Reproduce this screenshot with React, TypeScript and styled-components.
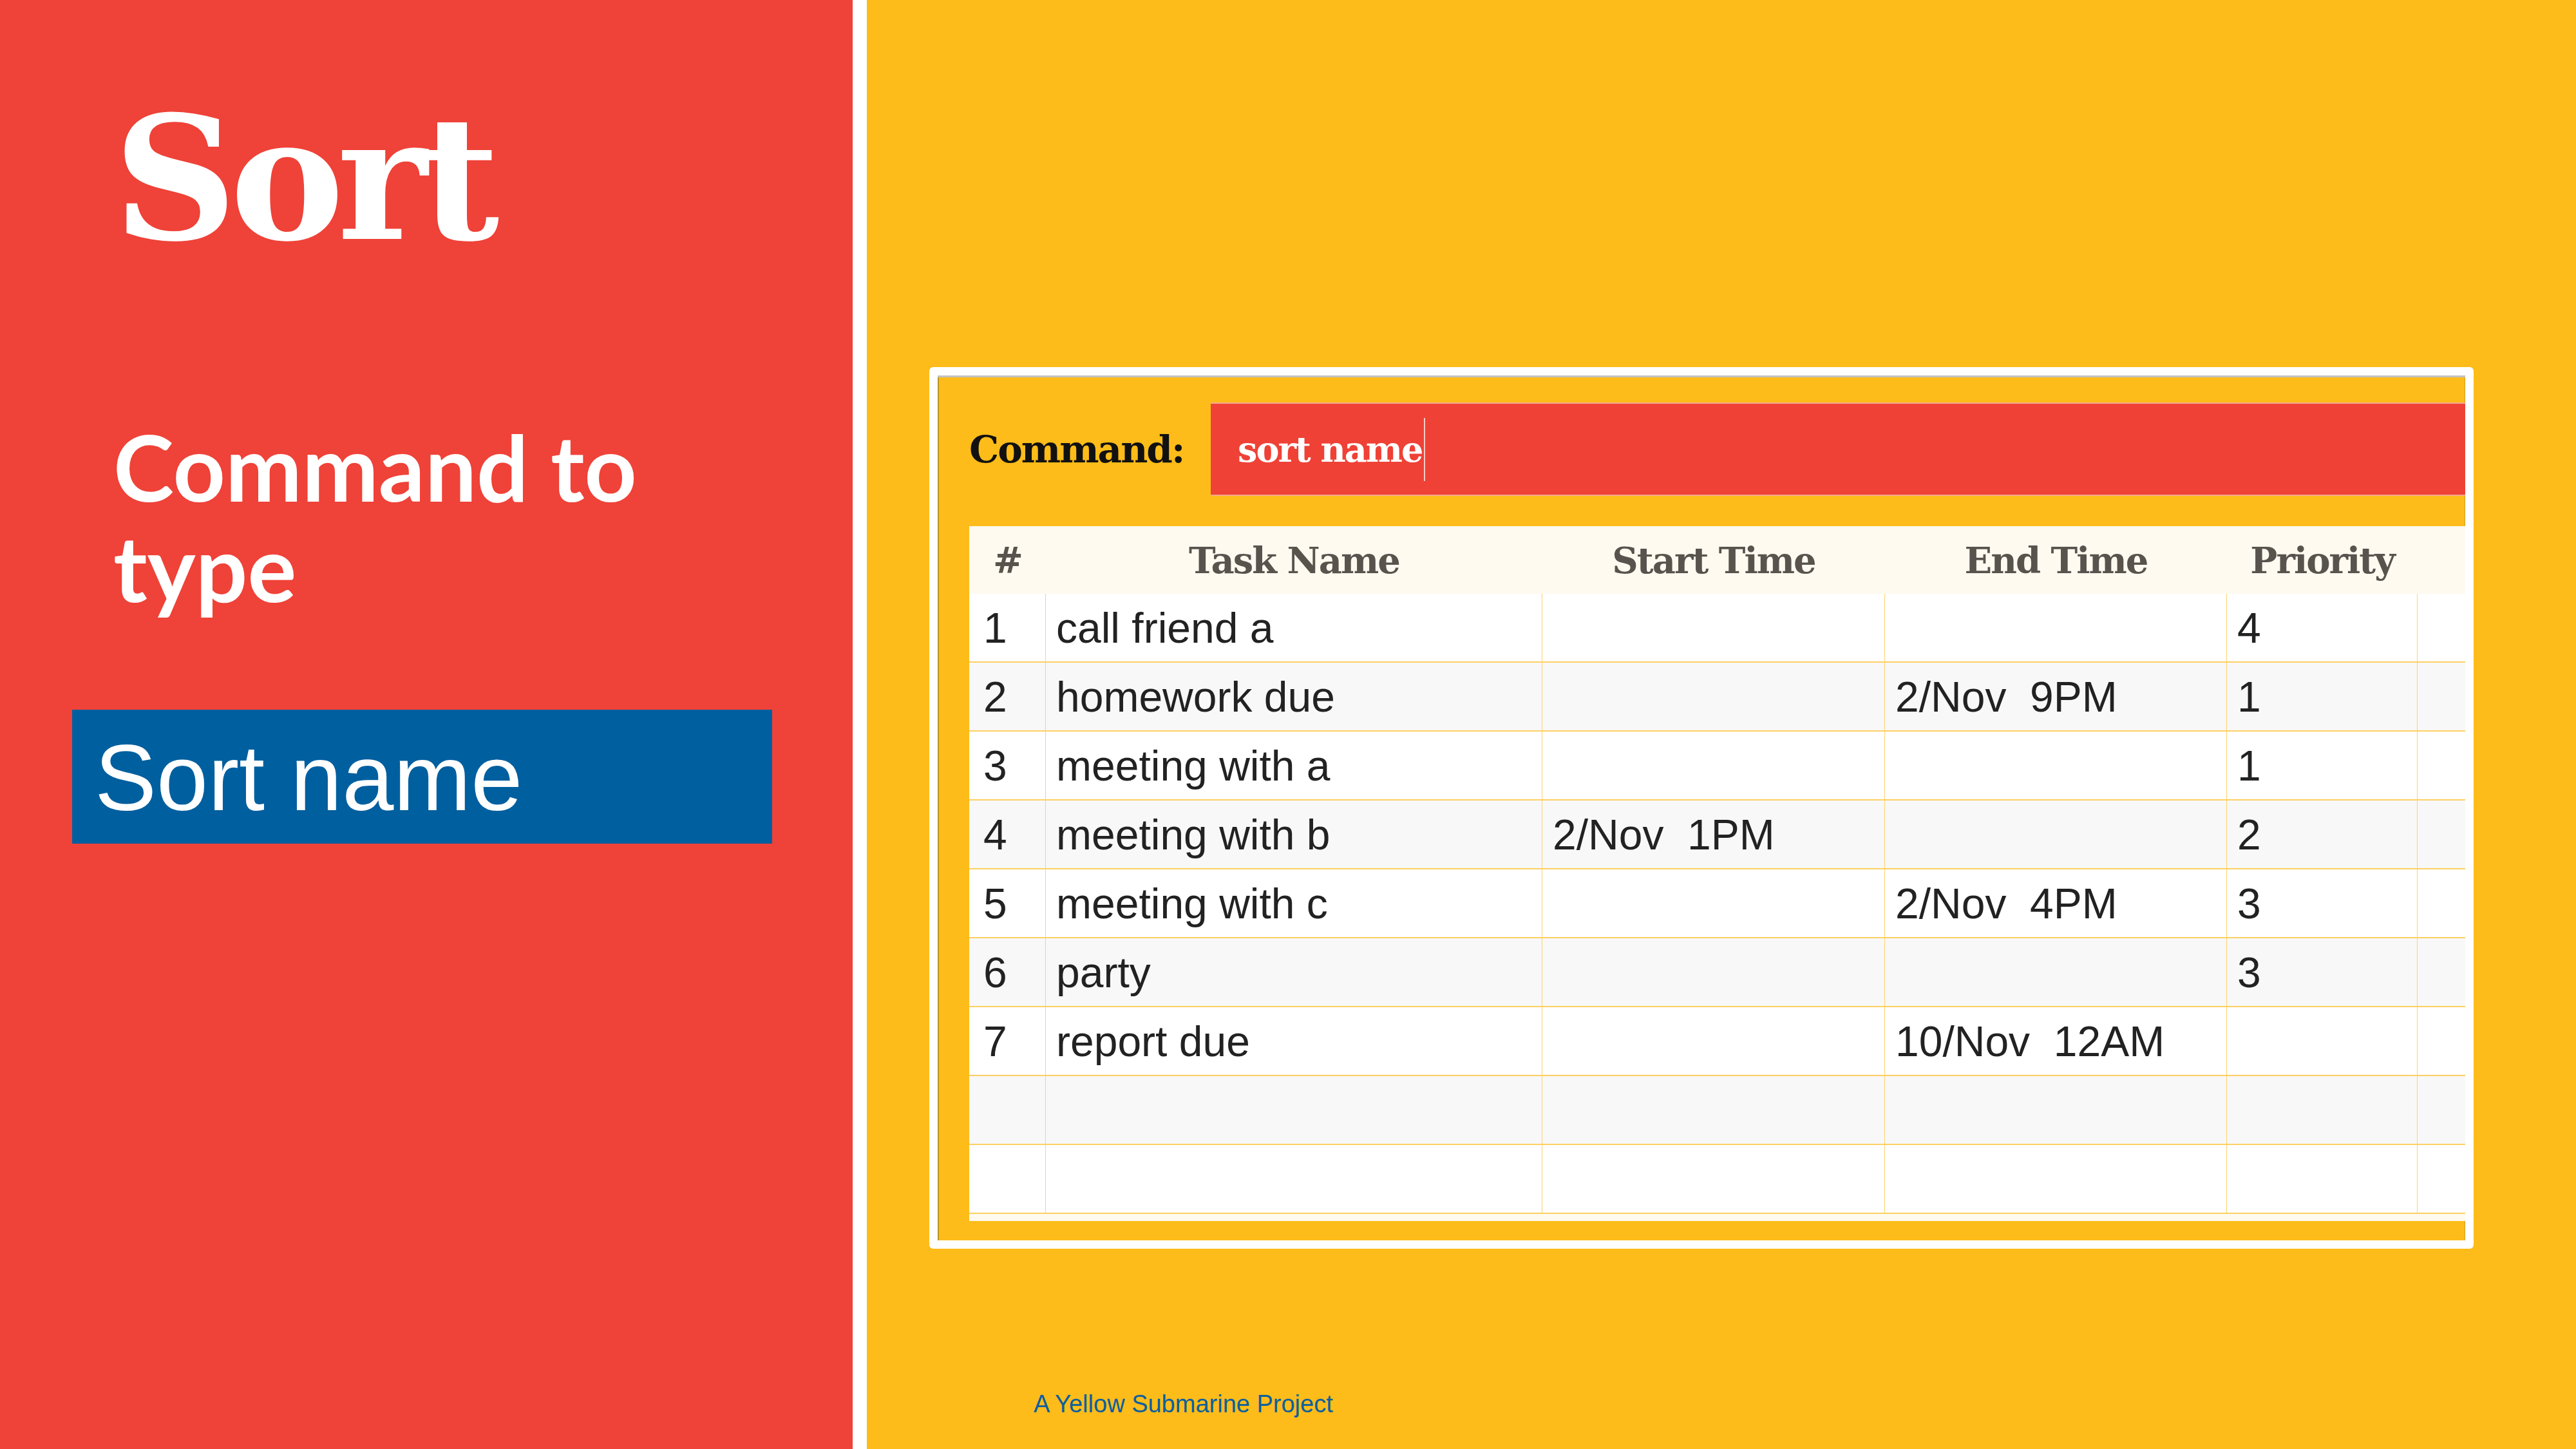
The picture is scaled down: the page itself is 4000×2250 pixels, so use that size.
import styled, { createGlobalStyle } from "styled-components";

const GlobalStyle = createGlobalStyle`
  *, *::before, *::after {
    box-sizing: border-box;
  }
  html, body {
    margin: 0;
    padding: 0;
  }
  body {
    width: 4000px;
    height: 2250px;
    overflow: hidden;
  }
`;

const slab = `"DejaVu Serif", "Liberation Serif", serif`;
const sans = `"Liberation Sans", Arial, sans-serif`;

const tasks = [
  { id: "1", name: "call friend a", start: "", end: "", priority: "4" },
  { id: "2", name: "homework due", start: "", end: "2/Nov  9PM", priority: "1" },
  { id: "3", name: "meeting with a", start: "", end: "", priority: "1" },
  { id: "4", name: "meeting with b", start: "2/Nov  1PM", end: "", priority: "2" },
  { id: "5", name: "meeting with c", start: "", end: "2/Nov  4PM", priority: "3" },
  { id: "6", name: "party", start: "", end: "", priority: "3" },
  { id: "7", name: "report due", start: "", end: "10/Nov  12AM", priority: "" },
  { id: "", name: "", start: "", end: "", priority: "" },
  { id: "", name: "", start: "", end: "", priority: "" },
];

const headers = ["#", "Task Name", "Start Time", "End Time", "Priority", ""];

const App = () => {
  return (
    <>
      <GlobalStyle />
      <StyledSlide>
        <StyledLeftPanel>
          <StyledTitle>Sort</StyledTitle>
          <StyledSubtitle>
            Command to
            <br />
            type
          </StyledSubtitle>
          <StyledCommandBox>Sort name</StyledCommandBox>
        </StyledLeftPanel>

        <StyledRightPanel>
          <StyledWindow>
            <StyledWindowInner>
              <StyledCommandRow>
                <StyledCommandLabel>Command:</StyledCommandLabel>
                <StyledInput>
                  sort name
                  <StyledCaret />
                </StyledInput>
              </StyledCommandRow>

              <StyledTable>
                <StyledHeaderRow>
                  {headers.map((h, i) => (
                    <StyledHeaderCell key={i}>{h}</StyledHeaderCell>
                  ))}
                </StyledHeaderRow>
                {tasks.map((t, i) => (
                  <StyledRow key={i} $alt={i % 2 === 1}>
                    <StyledCell $first>{t.id}</StyledCell>
                    <StyledCell>{t.name}</StyledCell>
                    <StyledCell>{t.start}</StyledCell>
                    <StyledCell>{t.end}</StyledCell>
                    <StyledCell>{t.priority}</StyledCell>
                    <StyledCell $last />
                  </StyledRow>
                ))}
              </StyledTable>
            </StyledWindowInner>
          </StyledWindow>

          <StyledFooter>A Yellow Submarine Project</StyledFooter>
        </StyledRightPanel>
      </StyledSlide>
    </>
  );
};

export default App;

const StyledSlide = styled.div`
  display: flex;
  width: 4000px;
  height: 2250px;
  overflow: hidden;
  background-color: #fdbc19;
`;

const StyledLeftPanel = styled.section`
  flex: 0 0 1346px;
  height: 100%;
  padding: 132px 0 0 112px;
  background-color: #ef4238;
  border-right: 22px solid #ffffff;
  display: flex;
  flex-direction: column;
  align-items: flex-start;
`;

const StyledTitle = styled.h1`
  margin: 13px 0 0 64px;
  font-family: ${slab};
  font-weight: 700;
  font-size: 266px;
  line-height: 1;
  letter-spacing: -11px;
  color: #ffffff;
`;

const StyledSubtitle = styled.h2`
  margin: 235px 0 0 64px;
  font-family: "Lato", "Open Sans", sans-serif;
  font-weight: 700;
  font-size: 142px;
  line-height: 156px;
  color: #ffffff;
`;

const StyledCommandBox = styled.div`
  margin-top: 144px;
  width: 1087px;
  height: 208px;
  padding: 35px 0 0 35px;
  background-color: #005f9f;
  font-family: ${sans};
  font-size: 144px;
  line-height: 1;
  color: #ffffff;
`;

const StyledRightPanel = styled.section`
  flex: 1;
  padding: 570px 0 0 97px;
  display: flex;
  flex-direction: column;
  align-items: flex-start;
`;

const StyledWindow = styled.div`
  width: 2398px;
  height: 1369px;
  border: 13px solid #ffffff;
  border-radius: 6px;
  background-color: #ffffff;
`;

const StyledWindowInner = styled.div`
  height: 100%;
  background-color: #fdbc19;
  border-top: 3px solid #c2c2c2;
  box-shadow: inset 2px 0 0 #b99328, inset -1px 0 0 #c9a02c;
  padding: 39px 0 0 49px;
  display: flex;
  flex-direction: column;
  gap: 47px;
`;

const StyledCommandRow = styled.div`
  display: flex;
  align-items: center;
  height: 145px;
`;

const StyledCommandLabel = styled.div`
  flex: 0 0 375px;
  font-family: ${slab};
  font-weight: 700;
  font-size: 58px;
  letter-spacing: -2px;
  color: #111111;
`;

const StyledInput = styled.div`
  flex: 1;
  height: 145px;
  display: flex;
  align-items: center;
  padding-left: 42px;
  background-color: #ef4136;
  border-top: 2px solid #f7a58e;
  border-bottom: 2px solid #f7a58e;
  font-family: ${slab};
  font-weight: 700;
  font-size: 54px;
  letter-spacing: -2px;
  color: #ffffff;
  white-space: pre;
`;

const StyledCaret = styled.span`
  display: inline-block;
  width: 2px;
  height: 98px;
  margin-left: 3px;
  background-color: rgba(255, 235, 230, 0.8);
`;

const StyledTable = styled.div`
  width: 2323px;
  background-color: #fefaf0;
  padding-bottom: 11px;
`;

const columns = "119px 771px 532px 531px 296px 1fr";

const StyledHeaderRow = styled.div`
  display: grid;
  grid-template-columns: ${columns};
  height: 105px;
  align-items: center;
`;

const StyledHeaderCell = styled.div`
  text-align: center;
  font-family: ${slab};
  font-weight: 700;
  font-size: 56px;
  letter-spacing: -2px;
  color: #58534d;
`;

const StyledRow = styled.div<{ $alt?: boolean }>`
  display: grid;
  grid-template-columns: ${columns};
  height: 107px;
  background-color: ${(p) => (p.$alt ? "#f8f8f8" : "#ffffff")};
  border-bottom: 2px solid #fdd062;
`;

const StyledCell = styled.div<{ $first?: boolean; $last?: boolean }>`
  display: flex;
  align-items: center;
  padding-left: ${(p) => (p.$first ? "22px" : "16px")};
  border-right: ${(p) => (p.$last ? "none" : "1px solid #fdd36c")};
  font-family: ${sans};
  font-size: 66px;
  color: #222222;
  white-space: pre;
`;

const StyledFooter = styled.div`
  margin: 222px 0 0 162px;
  font-family: ${sans};
  font-size: 38px;
  line-height: 1;
  color: #0a5f9e;
`;
